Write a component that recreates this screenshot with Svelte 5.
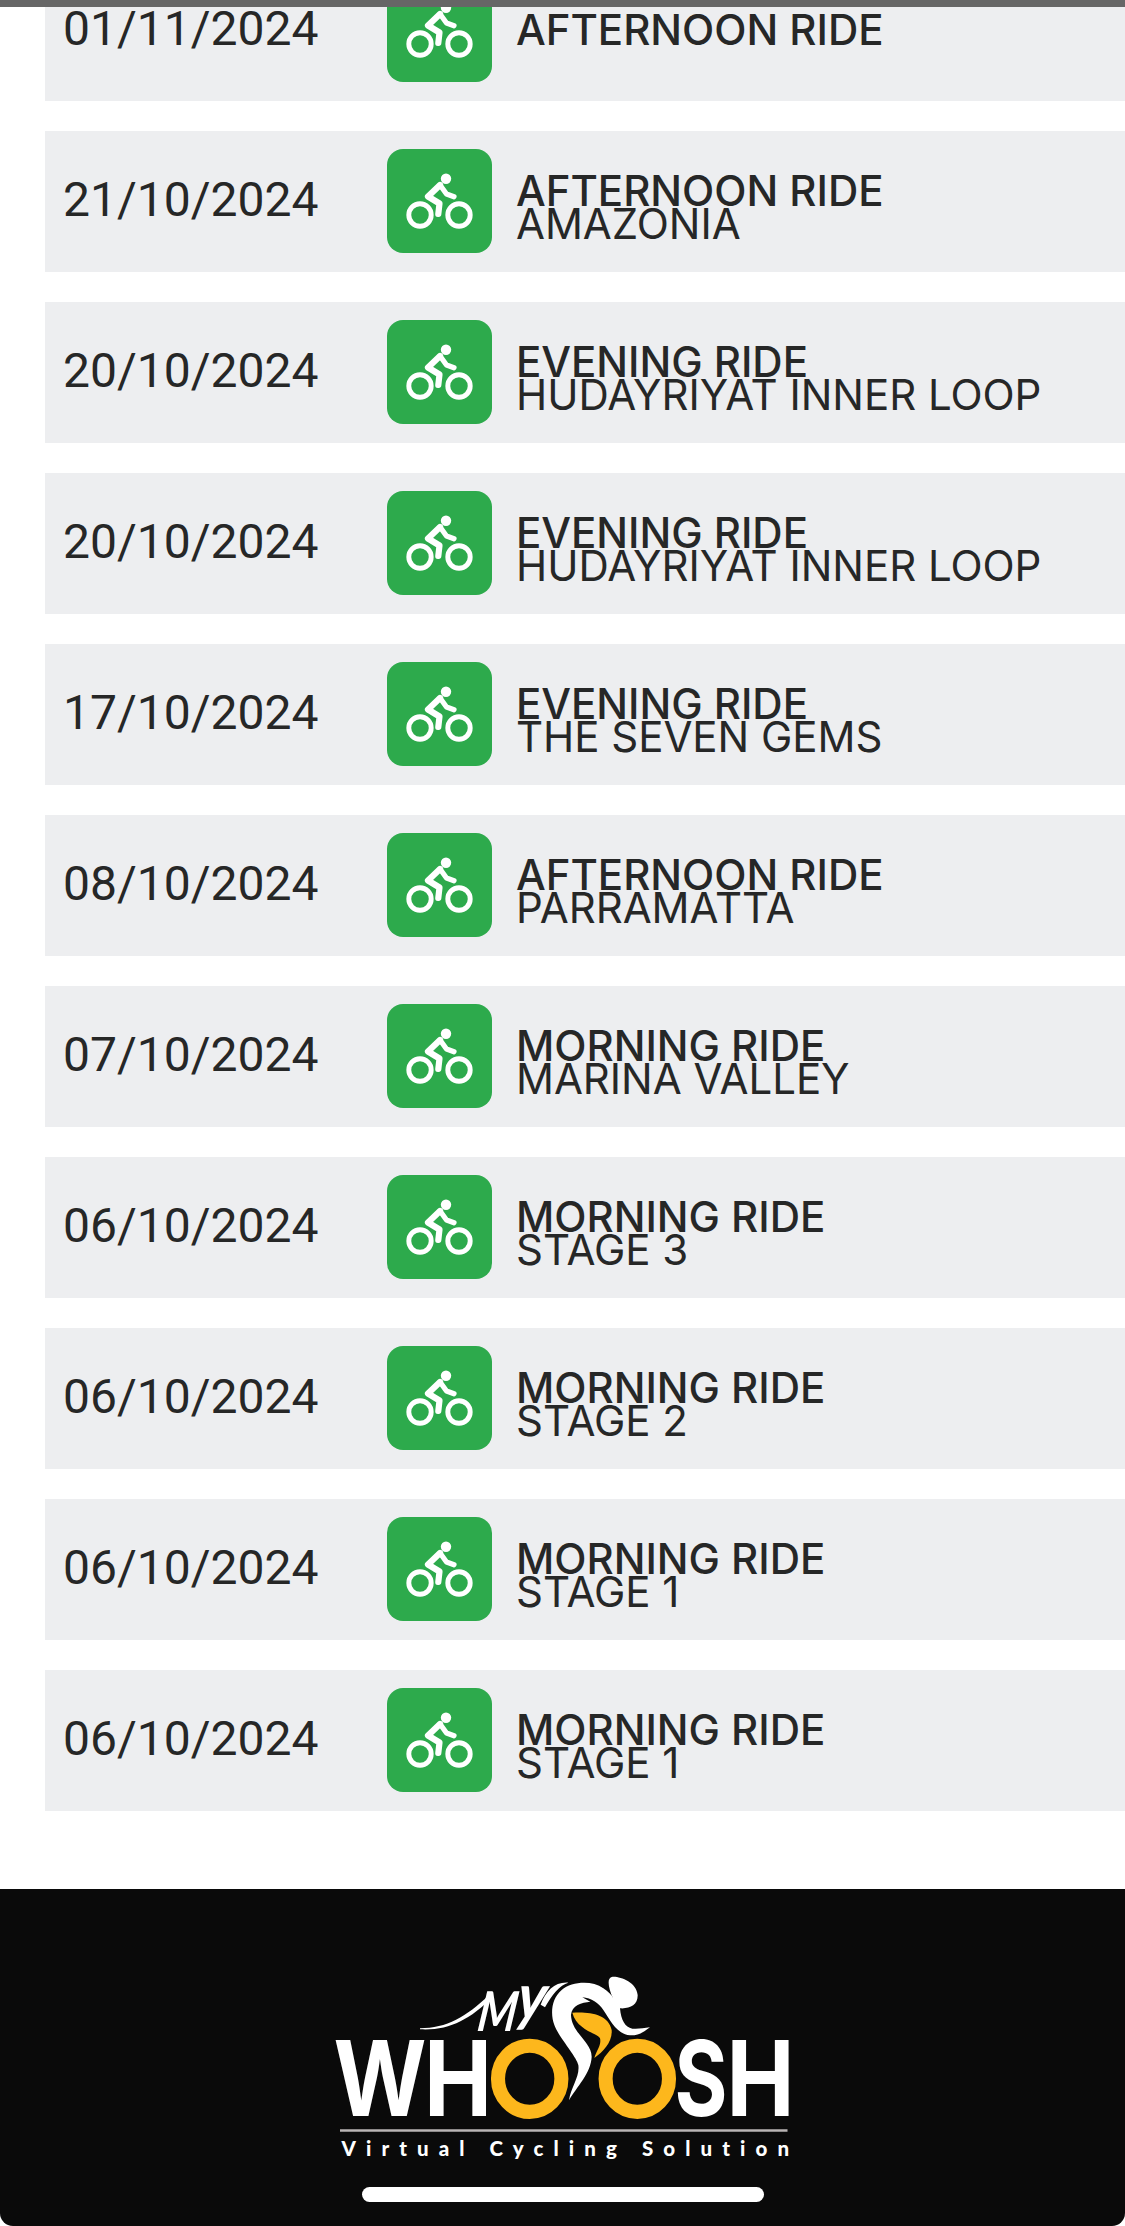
<script>
  const rides = [
    { date: '01/11/2024', title: 'AFTERNOON RIDE', route: '' },
    { date: '21/10/2024', title: 'AFTERNOON RIDE', route: 'AMAZONIA' },
    { date: '20/10/2024', title: 'EVENING RIDE', route: 'HUDAYRIYAT INNER LOOP' },
    { date: '20/10/2024', title: 'EVENING RIDE', route: 'HUDAYRIYAT INNER LOOP' },
    { date: '17/10/2024', title: 'EVENING RIDE', route: 'THE SEVEN GEMS' },
    { date: '08/10/2024', title: 'AFTERNOON RIDE', route: 'PARRAMATTA' },
    { date: '07/10/2024', title: 'MORNING RIDE', route: 'MARINA VALLEY' },
    { date: '06/10/2024', title: 'MORNING RIDE', route: 'STAGE 3' },
    { date: '06/10/2024', title: 'MORNING RIDE', route: 'STAGE 2' },
    { date: '06/10/2024', title: 'MORNING RIDE', route: 'STAGE 1' },
    { date: '06/10/2024', title: 'MORNING RIDE', route: 'STAGE 1' }
  ];
</script>

<div class="screen">
  <div class="topbar"></div>
  <main class="list">
    {#each rides as ride}
      <article class="ride">
        <time class="date">{ride.date}</time>
        <svg class="badge" viewBox="0 0 105 104" aria-hidden="true">
          <rect width="105" height="104" rx="16" fill="#2daa4c" />
          <g fill="none" stroke="#fff">
            <circle cx="33" cy="66" r="11.2" stroke-width="4.9" />
            <circle cx="72" cy="66" r="11.2" stroke-width="4.9" />
            <path d="M53 36 L41 47.5 L52.5 54.5 L51.3 65" stroke-width="6.2" stroke-linecap="round" stroke-linejoin="round" />
            <path d="M53 36 L59.5 45 L67 47.7" stroke-width="5.2" stroke-linecap="round" stroke-linejoin="round" />
          </g>
          <circle cx="59" cy="29.8" r="5.2" fill="#fff" />
        </svg>
        <div class="info" class:single={!ride.route}>
          <h2>{ride.title}</h2>
          {#if ride.route}<p>{ride.route}</p>{/if}
        </div>
      </article>
    {/each}
  </main>
  <footer class="footer">
    <svg class="logo" viewBox="330 1970 466 200" role="img" aria-label="MyWhoosh">
      <g fill="#fff" class="word">
        <text x="333.5" y="2116" textLength="93" lengthAdjust="spacingAndGlyphs">W</text>
        <text x="424" y="2116" textLength="68" lengthAdjust="spacingAndGlyphs">H</text>
        <text x="674.5" y="2116" textLength="53" lengthAdjust="spacingAndGlyphs">S</text>
        <text x="726.5" y="2116" textLength="68" lengthAdjust="spacingAndGlyphs">H</text>
      </g>
      <g fill="none" stroke="#fdb71c" stroke-width="14.1">
        <ellipse cx="529.7" cy="2078.8" rx="31.7" ry="33.1" />
        <ellipse cx="637.3" cy="2078.8" rx="31.7" ry="33.1" />
      </g>
      <!-- cyclist -->
      <g transform="translate(545 1970) scale(.33333)">
        <path fill="#fff" d="M72 391C78 350 105 320 100 285C95 260 40 200 28 165C15 130 20 85 50 60C80 35 140 30 175 55C190 65 200 75 204 84C190 55 185 25 200 21C220 17 275 35 278 75C279 105 255 117 225 115C228 150 240 172 262 176C280 178 295 174 315 172C295 187 280 197 255 196C215 192 195 150 175 120C160 98 140 85 112 82L136 95C110 98 80 105 78 135C80 190 140 215 140 260C138 310 95 350 72 391Z" />
        <path fill="#fdb71c" d="M82 128C130 125 190 130 200 180C203 215 175 245 148 264C155 240 170 225 165 205C158 190 95 180 82 128Z" />
      </g>
      <!-- swashes either side of the script word -->
      <g transform="translate(410 1970) scale(.33333)">
        <path fill="#fff" d="M30 175C110 175 170 140 236 76L245 84C180 148 115 183 30 178Z" />
        <path fill="#fff" d="M392 104C408 62 435 35 475 38C450 45 425 75 405 112Z" />
      </g>
      <g fill="#fff">
        <text class="script-m" transform="translate(476 2031) skewX(-8)" textLength="39" lengthAdjust="spacingAndGlyphs">M</text>
        <text class="script-y" transform="translate(515 2019) skewX(-8)" textLength="29" lengthAdjust="spacingAndGlyphs">y</text>
      </g>
      <path d="M340 2130.5H787.5" stroke="#b9b4b4" stroke-width="2.6" />
      <text class="tag" x="341.5" y="2156" textLength="447.5" lengthAdjust="spacing" fill="#fff">Virtual Cycling Solution</text>
    </svg>
    <div class="home"></div>
  </footer>
</div>

<style>
  :global(body) { margin: 0; background: #fff; }
  .screen { width: 1125px; height: 2226px; overflow: hidden; display: flex; flex-direction: column; background: #fff; }
  .topbar { height: 7px; flex: none; background: #666; }
  .list { flex: none; height: 1882px; box-sizing: border-box; padding-left: 45px; display: flex; flex-direction: column; justify-content: flex-end; gap: 30px; padding-bottom: 78px; overflow: hidden; }
  .ride { flex: none; height: 141px; box-sizing: border-box; display: grid; grid-template-columns: 324px 105px 1fr; align-items: center; padding: 0 0 1px 18px; background: #edeef0; color: #262727; }
  .date { font: 400 48px/56px Roboto, sans-serif; padding-bottom: 2px; }
  .badge { width: 105px; height: 104px; display: block; }
  .info { padding: 12px 0 0 24px; white-space: nowrap; font-family: Inter, sans-serif; font-size: 42px; line-height: 33px; letter-spacing: -0.03px; }
  .single { padding: 0 0 2px 24px; }
  h2, p { margin: 0; font-size: inherit; font-weight: 400; }
  h2 { font-weight: 500; }
  .footer { flex: 1; background: #0a0a0a; border-radius: 0 0 13px 13px; display: flex; flex-direction: column; align-items: center; padding-top: 81px; }
  .logo { width: 466px; height: 200px; flex: none; }
  .word { font: 700 104.5px Inter, sans-serif; }
  .script-m { font: italic 700 55px Lato, sans-serif; }
  .script-y { font: italic 700 64px Lato, sans-serif; }
  .tag { font: 900 20.5px Lato, sans-serif; font-variant-ligatures: none; }
  .home { width: 402px; height: 15px; margin-top: 17px; border-radius: 8px; background: #fff; }
</style>
